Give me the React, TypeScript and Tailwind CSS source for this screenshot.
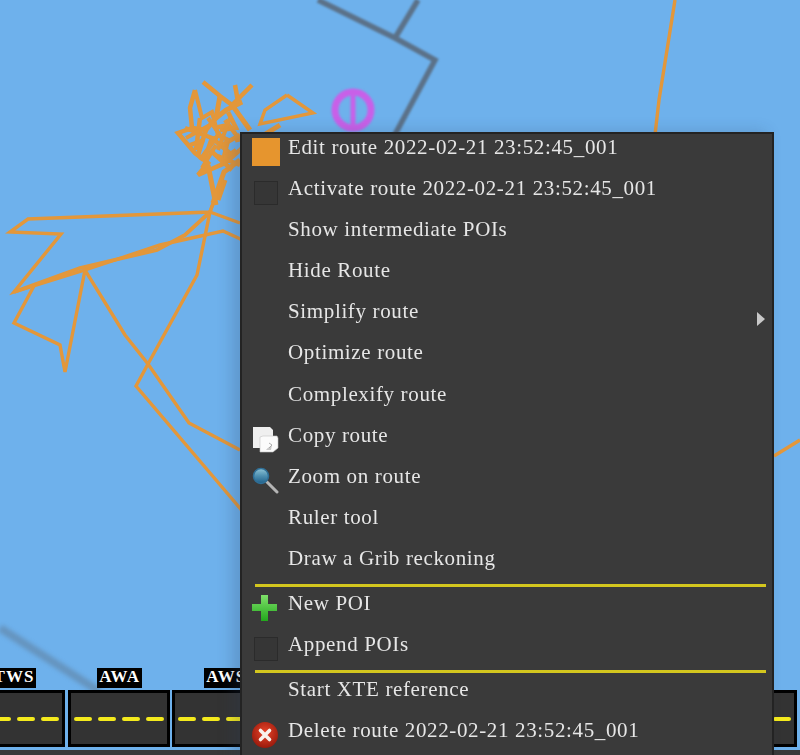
const menuFont = "font-['Liberation_Serif',serif]";

function CopyIcon() {
  return (
    <svg width="28" height="28" viewBox="0 0 28 28" className="ml-[1px] blur-[0.3px]">
      <path d="M1 1h17l3 3v18H1z" fill="#efefef" />
      <path d="M8 11l3-1h14l1 2v10l-5 4H8z" fill="#fbfbfb" stroke="#c2c2c2" strokeWidth="0.6" />
      <path d="M14 24c2-3 4-3 6-5l-1 5z" fill="#c9c9c9" />
      <path d="M17 17l3 2-3 3" fill="none" stroke="#a5a5a5" strokeWidth="0.9" />
    </svg>
  );
}

function ZoomIcon() {
  return (
    <svg width="28" height="28" viewBox="0 0 28 28" className="ml-[1px] blur-[0.3px]">
      <defs>
        <linearGradient id="lens" x1="0" y1="0" x2="0" y2="1">
          <stop offset="0" stopColor="#8fc4d6" />
          <stop offset="0.5" stopColor="#4d8fb0" />
          <stop offset="1" stopColor="#1f5f8a" />
        </linearGradient>
      </defs>
      <path d="M15 15l10 10" stroke="#b5b5b5" strokeWidth="3" strokeLinecap="round" />
      <circle cx="9" cy="9" r="7.5" fill="url(#lens)" stroke="#2f6f97" strokeWidth="1.5" />
    </svg>
  );
}

function PlusIcon() {
  return (
    <svg width="28" height="28" viewBox="0 0 28 28" className="blur-[0.3px]">
      <defs>
        <linearGradient id="plus" x1="0" y1="0" x2="0" y2="1">
          <stop offset="0" stopColor="#7fe06a" />
          <stop offset="1" stopColor="#22a81c" />
        </linearGradient>
      </defs>
      <path d="M10 1h7v9h9v7h-9v10h-7V17H1v-7h9z" fill="url(#plus)" />
    </svg>
  );
}

function DeleteIcon() {
  return (
    <svg width="28" height="28" viewBox="0 0 28 28" className="blur-[0.3px]">
      <defs>
        <radialGradient id="red" cx="0.5" cy="0.4" r="0.6">
          <stop offset="0" stopColor="#e8452a" />
          <stop offset="1" stopColor="#9a1a0c" />
        </radialGradient>
      </defs>
      <circle cx="14" cy="14" r="13" fill="url(#red)" />
      <path d="M9.5 9.5l9 9M18.5 9.5l-9 9" stroke="#f8f3ee" strokeWidth="3.6" strokeLinecap="round" />
    </svg>
  );
}

function EmptyBox() {
  return <div className="mt-[2px] ml-[1px] h-[24px] w-[24px] border border-[#2b2b2b] bg-[#363636]" />;
}

function OrangeBox() {
  return <div className="ml-[1px] h-[28px] w-[28px] bg-[#e6952e]" />;
}

function MenuRow({ label, icon, arrow }: { label: string; icon?: React.ReactNode; arrow?: boolean }) {
  return (
    <div className="relative flex h-[41.1px] shrink-0">
      <div className="flex w-[46px] shrink-0 justify-center pt-[4px]">{icon}</div>
      <div className="text-[21px] leading-[26px] tracking-[0.64px] text-[#e6e6e6] whitespace-nowrap blur-[0.25px]">{label}</div>
      {arrow && (
        <div className="absolute right-[7px] top-[14px] h-0 w-0 border-y-[7px] border-l-[8px] border-y-transparent border-l-[#c8c8c8]" />
      )}
    </div>
  );
}

function Separator() {
  return <div className="mt-[-2.5px] mb-[3.5px] mr-[6px] ml-[13px] h-[3px] shrink-0 bg-[#d3c61e]" />;
}

function ContextMenu() {
  return (
    <div className={`absolute left-[240px] top-[132px] flex h-[640px] w-[534px] flex-col border-2 border-b-0 border-[#232323] bg-[#3a3a3a] shadow-[-8px_0_14px_rgba(40,60,90,0.22)] ${menuFont}`}>
      <MenuRow label="Edit route 2022-02-21 23:52:45_001" icon={<OrangeBox />} />
      <MenuRow label="Activate route 2022-02-21 23:52:45_001" icon={<EmptyBox />} />
      <MenuRow label="Show intermediate POIs" />
      <MenuRow label="Hide Route" />
      <MenuRow label="Simplify route" arrow />
      <MenuRow label="Optimize route" />
      <MenuRow label="Complexify route" />
      <MenuRow label="Copy route" icon={<CopyIcon />} />
      <MenuRow label="Zoom on route" icon={<ZoomIcon />} />
      <MenuRow label="Ruler tool" />
      <MenuRow label="Draw a Grib reckoning" />
      <Separator />
      <MenuRow label="New POI" icon={<PlusIcon />} />
      <MenuRow label="Append POIs" icon={<EmptyBox />} />
      <Separator />
      <MenuRow label="Start XTE reference" />
      <MenuRow label="Delete route 2022-02-21 23:52:45_001" icon={<DeleteIcon />} />
    </div>
  );
}

function Gauge({ label, labelClass }: { label?: string; labelClass?: string }) {
  return (
    <div className="flex w-[102px] shrink-0 flex-col items-center">
      <div className="h-[20px]">
        {label && (
          <div className={`h-[20px] bg-black px-[2px] text-[17px] leading-[18px] font-bold tracking-[1px] text-white ${menuFont} ${labelClass ?? ""}`}>{label}</div>
        )}
      </div>
      <div className="mt-[2px] flex h-[57px] w-full items-center justify-center gap-[6px] border-[3px] border-black bg-[#333333]">
        {[0, 1, 2, 3].map((i) => (
          <div key={i} className="h-[4px] w-[18px] rounded-full bg-[#f4ea1d]" />
        ))}
      </div>
    </div>
  );
}

function MapLayer() {
  return (
    <svg className="absolute inset-0" width="800" height="755" viewBox="0 0 800 755">
      <g fill="none" stroke="#5b7188" strokeWidth="5.5" className="blur-[1px]">
        <path d="M318 0L395 38L435 60L392 140M418 0L395 38" />
      </g>
      <path d="M0 628L100 692" fill="none" stroke="#5b7188" strokeWidth="8" strokeOpacity="0.45" className="blur-[2px]" />
      <g fill="none" stroke="#c860e8" className="blur-[1.2px]">
        <circle cx="353" cy="110" r="18" strokeWidth="7" />
        <path d="M353 92V128" strokeWidth="5" />
      </g>
      <g fill="none" stroke="#e3973a" strokeWidth="3.4" strokeLinejoin="miter" className="blur-[0.4px]">
        <path d="M224 172L210 212L28 219L10 232L61 234L14 292L85 270L160 245L223 231L260 248" />
        <path d="M14 292L80 268L157 250L185 235L210 212" strokeWidth="3.8" />
        <path d="M35 284L14 323L60 345L65 372L85 270L125 335L148 364L189 423L240 450" />
        <path d="M218 190L210 212L197 275L148 364L136 386L216 480L250 520" />
        <path d="M210 212L240 223" />
        <path d="M675 0L659 100L655 135M800 440L774 456" />
        <path d="M203 82L220 96L232 105L252 85M235 85L238 102" strokeWidth="4.5" />
        <path d="M195 90L190 108L192 128L178 133L195 153L208 163L198 175L225 163L240 150" strokeWidth="4.5" />
        <path d="M195 90L202 118L212 112L218 135" strokeWidth="4" />
        <path d="M220 96L216 118L226 110L242 102L232 105L250 130" strokeWidth="5" />
        <path d="M287 95L265 110L260 124L313 113L287 95" />
        <path d="M192 128L206 130L216 118M185 128L212 138L204 160M200 160L218 135L228 140L222 165" strokeWidth="4.5" />
        <path d="M225 120L240 140M200 118L196 150M206 130L198 155M212 138L232 155M228 112L236 128L220 130" strokeWidth="4.5" />
        <path d="M213 203L224 172L240 160M208 165L216 205M235 140L260 135M225 180L218 200M240 150L280 125" strokeWidth="5" />
        <path d="M222 145L240 135M215 155L240 165M210 150L232 170M228 125L214 128M204 140L190 145" strokeWidth="4.5" />
        <path d="M208 118L222 138M186 138L210 125M216 145L202 168M230 118L218 150M236 150L224 158" strokeWidth="4" />
      </g>
    </svg>
  );
}

export default function App() {
  return (
    <div className="relative h-[755px] w-[800px] overflow-hidden bg-[#6eb1ec]">
      <MapLayer />
      <div className="absolute inset-x-0 bottom-0 flex h-[87px] flex-col">
        <div className="ml-[-37px] flex gap-[2.6px]">
          <Gauge label="TWS" />
          <Gauge label="AWA" labelClass="ml-[2px]" />
          <Gauge label="AWS" labelClass="ml-[6px]" />
          <Gauge />
          <Gauge />
          <Gauge />
          <Gauge />
          <Gauge />
        </div>
        <div className="mt-[3px] h-[5px] bg-[#3a3a3a]" />
      </div>
      <ContextMenu />
    </div>
  );
}
